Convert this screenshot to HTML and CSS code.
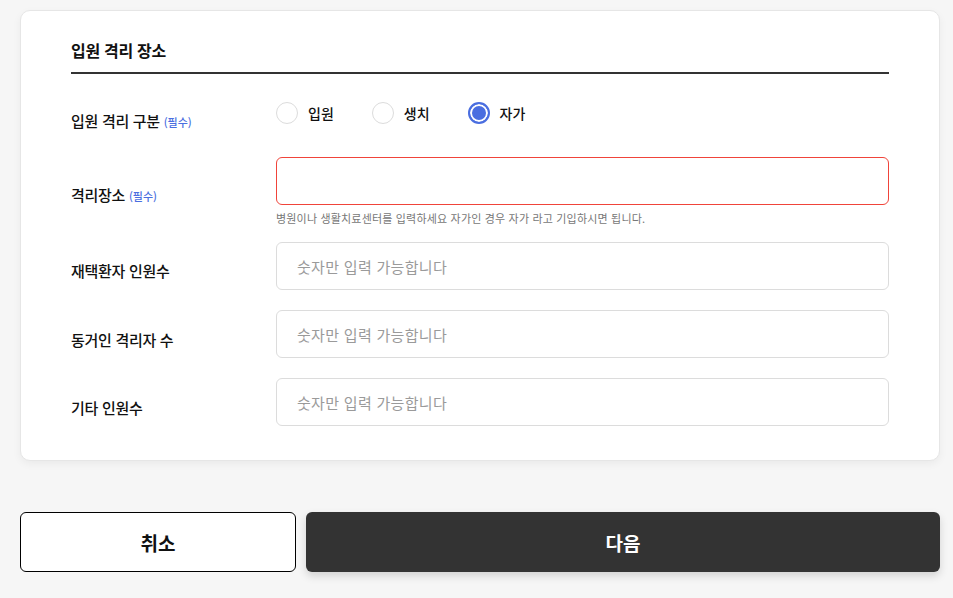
FILE: index.html
```html
<!DOCTYPE html>
<html lang="ko">
<head>
<meta charset="utf-8">
<link rel="stylesheet" href="styles.css">
</head>
<body>
<div class="page">
  <section class="card">
    <h2 class="title">입원 격리 장소</h2>
    <div class="row row-radio">
      <div class="label">입원 격리 구분 <span class="req">(필수)</span></div>
      <div class="field radios">
        <label class="radio"><span class="dot"></span>입원</label>
        <label class="radio"><span class="dot"></span>생치</label>
        <label class="radio on"><span class="dot"></span>자가</label>
      </div>
    </div>
    <div class="row row-place">
      <div class="label">격리장소 <span class="req">(필수)</span></div>
      <div class="field">
        <div class="input error"></div>
        <p class="help">병원이나 생활치료센터를 입력하세요 자가인 경우 자가 라고 기입하시면 됩니다.</p>
      </div>
    </div>
    <div class="row row-num">
      <div class="label">재택환자 인원수</div>
      <div class="field"><div class="input"><span class="ph">숫자만 입력 가능합니다</span></div></div>
    </div>
    <div class="row row-num">
      <div class="label">동거인 격리자 수</div>
      <div class="field"><div class="input"><span class="ph">숫자만 입력 가능합니다</span></div></div>
    </div>
    <div class="row row-num">
      <div class="label">기타 인원수</div>
      <div class="field"><div class="input"><span class="ph">숫자만 입력 가능합니다</span></div></div>
    </div>
  </section>
  <div class="actions">
    <button class="btn cancel">취소</button>
    <button class="btn next">다음</button>
  </div>
</div>
</body>
</html>
```
FILE: styles.css
```css
* { box-sizing: border-box; }
html, body { margin: 0; padding: 0; }
body {
  background: #f6f6f6;
  font-family: "Noto Sans CJK KR", "Noto Sans", sans-serif;
  color: #111;
  width: 953px;
  height: 598px;
  overflow: hidden;
}
.page { padding: 10px 13px 0 20px; }
.card {
  width: 920px;
  background: #fff;
  border: 1px solid #e6e6e6;
  border-radius: 10px;
  box-shadow: 0 3px 8px rgba(0,0,0,0.05);
  padding: 27px 50px 34px 50px;
}
.title {
  margin: 0;
  font-size: 16px;
  font-weight: 700;
  line-height: 24px;
  padding-bottom: 10px;
  border-bottom: 2px solid #333;
  letter-spacing: -0.3px;
}
.row { display: flex; }
.label {
  width: 205px;
  flex: none;
  font-size: 15px;
  font-weight: 500;
  line-height: 22px;
  letter-spacing: -0.3px;
}
.req { font-size: 11px; color: #4a6ee0; font-weight: 500; letter-spacing: 0; }
.field { flex: 1; }
.row-radio { margin-top: 27px; }
.row-radio .label { padding-top: 9px; }
.radios { display: flex; height: 22px; padding-top: 1px; box-sizing: content-box; }
.radio {
  display: flex;
  align-items: center;
  font-size: 14px;
  font-weight: 500;
  line-height: 22px;
  margin-right: 38px;
}
.dot {
  width: 22px; height: 22px;
  border: 1px solid #dcdcdc;
  border-radius: 50%;
  margin-right: 10px;
  background: #fff;
}
.radio.on .dot {
  border: 2px solid #4a6ee0;
  background: #4a6ee0;
  box-shadow: inset 0 0 0 2px #fff;
}
.row-place { margin-top: 24px; }
.row-place .label { padding-top: 27px; }
.input {
  height: 48px;
  border: 1px solid #dcdcdc;
  border-radius: 6px;
  padding: 0 20px;
  display: flex;
  align-items: center;
}
.input.error { border-color: #f0443a; }
.ph { color: #9a9a9a; font-size: 15px; letter-spacing: 0.3px; }
.help {
  margin: 5px 0 0;
  font-size: 11px;
  line-height: 16px;
  color: #777;
  letter-spacing: 0.18px;
}
.row-num .label { padding-top: 18px; }
.row-place + .row-num { margin-top: 16px; }
.row-num + .row-num { margin-top: 20px; }
.row-num + .row-num .label { padding-top: 19px; }
.actions {
  display: flex;
  gap: 10px;
  margin-top: 51px;
  width: 920px;
}
.btn {
  height: 60px;
  border-radius: 6px;
  font-family: inherit;
  font-size: 19px;
  font-weight: 700;
  cursor: pointer;
}
.cancel {
  width: 276px;
  background: #fff;
  border: 1px solid #000;
  color: #111;
}
.next {
  flex: 1;
  background: #333;
  border: none;
  color: #fff;
  box-shadow: 0 4px 8px rgba(0,0,0,0.15);
}
```
